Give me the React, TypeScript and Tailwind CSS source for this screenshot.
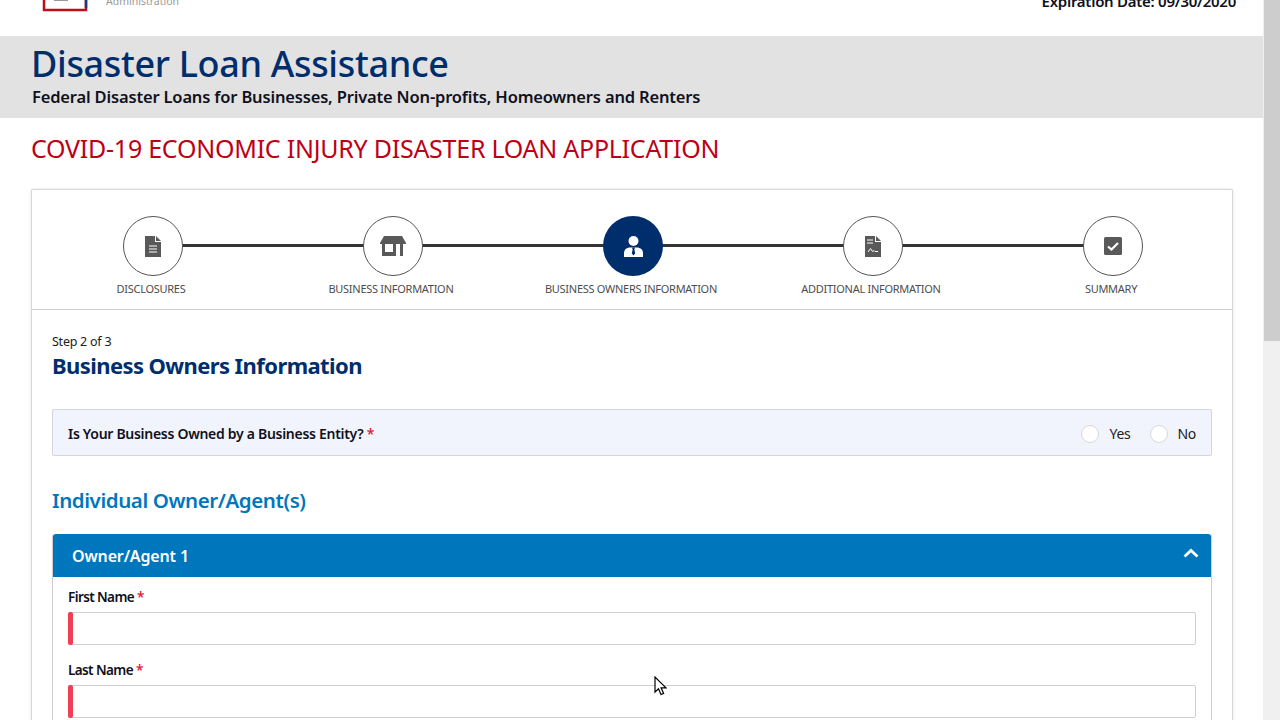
import type { ReactNode } from "react"

const steps = [
  { label: "DISCLOSURES", icon: "doc" },
  { label: "BUSINESS INFORMATION", icon: "store" },
  { label: "BUSINESS OWNERS INFORMATION", icon: "owner", active: true },
  { label: "ADDITIONAL INFORMATION", icon: "sign" },
  { label: "SUMMARY", icon: "check" },
]

function StepIcon({ name }: { name: string }) {
  if (name === "doc")
    return (
      <svg width="16" height="21" viewBox="0 0 16 21">
        <path d="M0 0h10v6h6v15H0z" fill="#595959" />
        <path d="M11 0l5 5h-5z" fill="#595959" />
        <path d="M4 10h8M4 13h8M4 16h8" stroke="#fff" strokeWidth="1" />
      </svg>
    )
  if (name === "store")
    return (
      <svg width="26" height="20" viewBox="0 0 26 20">
        <path d="M4 0h18l4 7v1H0V7z" fill="#595959" />
        <path d="M2 8h3v8h8V8h3v12H2z" fill="#595959" />
        <path d="M20 8h3v12h-3z" fill="#595959" />
      </svg>
    )
  if (name === "owner")
    return (
      <svg width="19" height="21" viewBox="0 0 19 21">
        <circle cx="9.5" cy="5" r="5" fill="#fff" />
        <path d="M0 21v-4c0-3 2-5 5-5.500h9c3 .5 5 2.500 5 5.500v4z" fill="#fff" />
        <path d="M8 11.500h3l-.6 2 .8 4-1.700 2-1.700-2 .8-4z" fill="#002e6d" />
      </svg>
    )
  if (name === "sign")
    return (
      <svg width="16" height="21" viewBox="0 0 16 21">
        <path d="M0 0h10v6h6v15H0z" fill="#595959" />
        <path d="M11 0l5 5h-5z" fill="#595959" />
        <path d="M2 4h6M2 7h6" stroke="#fff" strokeWidth="1" />
        <path d="M3 16l2.500-3.500 2 3 1.500-1 1 1h3" stroke="#fff" strokeWidth="1" fill="none" />
      </svg>
    )
  return (
    <svg width="18" height="18" viewBox="0 0 18 18">
      <rect width="18" height="18" rx="1.500" fill="#595959" />
      <path d="M4 9.500l3.500 3L14 6" stroke="#fff" strokeWidth="2.200" fill="none" />
    </svg>
  )
}

function Req() {
  return <span className="text-[#e31c3d]"> *</span>
}

function Field({ label }: { label: ReactNode }) {
  return (
    <div className="mb-[11px]">
      <div className="h-[29px] pt-[4px] text-[13.500px] font-semibold leading-[20px] tracking-[-0.6px] text-[#101020]">{label}</div>
      <div className="flex h-[33px] rounded-[2px] border border-[#cfcfcf] bg-white">
        <div className="ml-[-1px] mt-[-1px] h-[33px] w-[5px] rounded-[2px] bg-[#ef3e56]" />
      </div>
    </div>
  )
}

export default function App() {
  return (
    <div className="relative flex h-[720px] overflow-hidden bg-white font-['Noto_Sans',sans-serif]">
      <div className="w-[1263px] shrink-0">
        <header className="flex h-[36px] items-end justify-between overflow-hidden pl-[40px] pr-[27px]">
          <div className="flex items-end gap-[16px]">
            <svg width="50" height="13" viewBox="0 0 50 13" className="mb-[24px]">
              <path d="M4 0v11h42V0" stroke="#c00d1e" strokeWidth="2.500" fill="none" />
              <path d="M46 0v9" stroke="#183a75" strokeWidth="2.500" />
              <path d="M14 0h14v2H14z" fill="#999" />
            </svg>
            <span className="mb-[33px] text-[10.500px] leading-[4px] text-[#999]">Administration</span>
          </div>
          <span className="mb-[25px] text-[15px] font-semibold leading-[20px] tracking-[-0.27px] text-[#101020]">Expiration Date: 09/30/2020</span>
        </header>

        <section className="h-[82px] bg-[#e2e2e2] pl-[32px] pt-[7px]">
          <h1 className="ml-[-1px] text-[36px] font-medium leading-[42px] tracking-[-0.33px] text-[#002e6d]">Disaster Loan Assistance</h1>
          <p className="mt-[1px] text-[16.500px] font-semibold leading-[22px] tracking-[-0.17px] text-[#101020]">Federal Disaster Loans for Businesses, Private Non-profits, Homeowners and Renters</p>
        </section>

        <h2 className="pl-[31px] pt-[13px] text-[25px] leading-[34px] tracking-[-0.25px] text-[#bd0016]">COVID-19 ECONOMIC INJURY DISASTER LOAN APPLICATION</h2>

        <main className="ml-[31px] mt-[24px] w-[1202px] rounded-t-[2px] border border-[#d8d8d8] shadow-[0_0_3px_rgba(0,0,0,0.12)]">
          <div className="relative h-[120px] border-b border-[#cfcfcf] pt-[26px]">
            <div className="absolute left-[121px] top-[54px] h-[3px] w-[960px] bg-[#333]" />
            <div className="relative ml-[1px] grid grid-cols-[repeat(5,240px)]">
              {steps.map((s) => (
                <div key={s.label} className="flex flex-col items-center">
                  <div
                    className={
                      s.active
                        ? "flex h-[60px] w-[60px] items-center justify-center rounded-full bg-[#002e6d]"
                        : "flex h-[60px] w-[60px] items-center justify-center rounded-full border border-[#555] bg-white"
                    }
                  >
                    <StepIcon name={s.icon} />
                  </div>
                  <span className="ml-[-4px] mt-[5px] whitespace-nowrap text-[11px] leading-[15px] tracking-[-0.28px] text-[#4d4d4d]">{s.label}</span>
                </div>
              ))}
            </div>
          </div>

          <div className="px-[20px] pt-[23px]">
            <p className="text-[12.500px] leading-[17px] tracking-[-0.25px] text-[#212121]">Step 2 of 3</p>
            <h3 className="text-[22px] font-bold leading-[30px] tracking-[-0.59px] text-[#002e6d]">Business Owners Information</h3>

            <div className="mt-[29px] flex h-[47px] items-center justify-between rounded-[2px] border border-[#d4d6de] bg-[#f1f4fc] pl-[15px] pr-[15px] pt-[2px]">
              <span className="text-[14px] font-semibold tracking-[-0.29px] text-[#101020]">
                Is Your Business Owned by a Business Entity?
                <Req />
              </span>
              <div className="flex items-center text-[14px] tracking-[-0.3px] text-[#212121]">
                <span className="h-[18px] w-[18px] rounded-full border border-[#d8d8d8] bg-white" />
                <span className="ml-[10px] w-[41px]">Yes</span>
                <span className="h-[18px] w-[18px] rounded-full border border-[#d8d8d8] bg-white" />
                <span className="ml-[9px]">No</span>
              </div>
            </div>

            <h3 className="mt-[29px] text-[20.500px] font-semibold leading-[30px] tracking-[-0.42px] text-[#0076bd]">Individual Owner/Agent(s)</h3>

            <div className="mt-[19px] rounded-t-[3px] border border-t-0 border-[#cfcfcf]">
              <div className="flex h-[43px] items-center justify-between rounded-t-[3px] bg-[#0076bd] pl-[19px] pr-[12px]">
                <span className="text-[16px] font-semibold tracking-[-0.15px] text-white">Owner/Agent 1</span>
                <svg width="16" height="10" viewBox="0 0 16 10" className="mb-[5px]">
                  <path d="M1.500 8.500L8 2.500l6.500 6" stroke="#fff" strokeWidth="2.800" fill="none" />
                </svg>
              </div>
              <div className="px-[15px] pt-[6px]">
                <Field label={<>First Name<Req /></>} />
                <Field label={<>Last Name<Req /></>} />
              </div>
            </div>
          </div>
        </main>
      </div>

      <div className="w-[17px] shrink-0 bg-[#f0f0f0]">
        <div className="ml-[1px] h-[341px] bg-[#cdcdcd]" />
      </div>

      <svg width="13" height="20" viewBox="0 0 13 20" className="absolute left-[654px] top-[676px]">
        <path d="M1 1v15l3.500-3.300 2.500 5.800 2.600-1.100-2.500-5.600H12z" fill="#fff" stroke="#000" strokeWidth="1.200" />
      </svg>
    </div>
  )
}
